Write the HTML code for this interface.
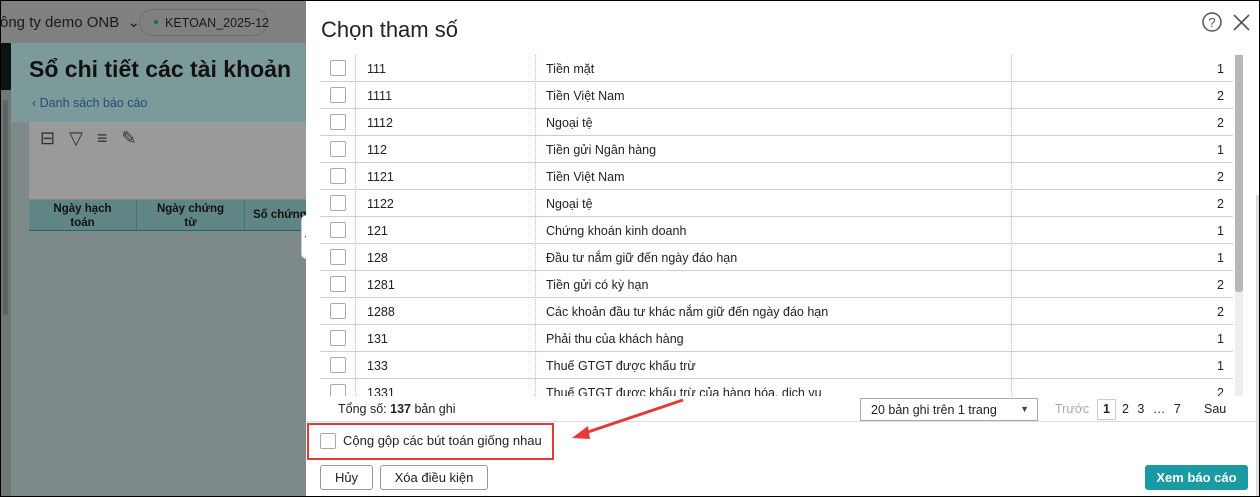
<!DOCTYPE html>
<html><head><meta charset="utf-8"><style>
*{box-sizing:border-box;margin:0;padding:0;white-space:nowrap}
body{width:1260px;height:497px;overflow:hidden;position:relative;font-family:"Liberation Sans",sans-serif;background:#7e8a8a;font-size:13px;color:#222}
.abs{position:absolute}
.row{position:absolute;left:320px;width:913px;height:27px;border-bottom:1px solid #cfcfcf}
.row .cb{position:absolute;left:10px;top:5px;width:16px;height:16px;border:1px solid #aaa;border-radius:2px;background:#fff}
.row span{position:absolute;top:7px;font-size:12.5px}
.c1{left:47px}.c2{left:226px}.c3{right:9px;color:#222}
.btn{position:absolute;top:465px;height:25px;border:1px solid #999;border-radius:3px;background:#fff;font-size:13px;text-align:center;line-height:23px}
.dl{position:absolute;top:55px;height:341px;width:0;border-left:1px dotted #9cd0d0}
</style></head><body>
<div class="abs" style="left:0;top:0;width:306px;height:43px;background:#808080"></div>
<div class="abs" style="left:0;top:13px;font-size:15px;color:#1a1a1a">ông ty demo ONB &nbsp;⌄</div>
<div class="abs" style="left:139px;top:9px;width:129px;height:27px;border:1px solid #6f6f6f;border-radius:14px;font-size:12.5px;padding:6px 0 0 25px;color:#1a1a1a">KETOAN_2025-12</div>
<div class="abs" style="left:154px;top:20px;width:4px;height:4px;border-radius:50%;background:#0d6f6f"></div>
<div class="abs" style="left:0;top:43px;width:11px;height:47px;background:#0a1212"></div>
<div class="abs" style="left:0;top:90px;width:11px;height:407px;background:#6f7777"></div>
<div class="abs" style="left:3px;top:100px;width:5px;height:215px;background:#5d6464;border-radius:3px"></div>
<div class="abs" style="left:11px;top:43px;width:295px;height:79px;background:#7d9a9a"></div>
<div class="abs" style="left:29px;top:56px;font-size:23px;font-weight:bold;color:#111">Sổ chi tiết các tài khoản</div>
<div class="abs" style="left:32px;top:96px;font-size:12.5px;color:#1e4e7a">‹ Danh sách báo cáo</div>
<div class="abs" style="left:29px;top:122px;width:277px;height:78px;background:#9a9a9a;border-bottom:1px solid #888"></div>
<div class="abs" style="left:40px;top:128px;font-size:18px;color:#333;letter-spacing:14px">⊟▽≡✎</div>
<div class="abs" style="left:29px;top:200px;width:277px;height:31px;background:#5f8585;border-bottom:1px solid #1e6b6b;font-size:11.5px;font-weight:bold;color:#111;overflow:hidden">
<div class="abs" style="left:0;width:107px;text-align:center;top:2px;line-height:14px;white-space:normal">Ngày hạch<br>toán</div>
<div class="abs" style="left:107px;top:0;width:1px;height:31px;background:#4d7070"></div>
<div class="abs" style="left:108px;width:107px;text-align:center;top:2px;line-height:14px;white-space:normal">Ngày chứng<br>từ</div>
<div class="abs" style="left:215px;top:0;width:1px;height:31px;background:#4d7070"></div>
<div class="abs" style="left:224px;top:9px">Số chứng</div>
</div>
<div class="abs" style="left:301px;top:215px;width:11px;height:44px;background:#fff;border:1px solid #ccc;border-radius:5px;font-size:12px;line-height:40px;text-align:center;color:#555">‹</div>
<div class="abs" style="left:306px;top:0;width:954px;height:497px;background:#fff"></div>
<div class="abs" style="left:321px;top:17px;font-size:22px;color:#222">Chọn tham số</div>
<svg class="abs" style="left:1202px;top:12px" width="50" height="22"><circle cx="10" cy="10" r="9" fill="none" stroke="#555" stroke-width="1.5"/><text x="10" y="15" font-size="13" text-anchor="middle" fill="#555" font-family="Liberation Sans">?</text><path d="M32 3 L47 18 M47 3 L32 18" stroke="#555" stroke-width="1.6"/></svg>
<div class="row" style="top:55px"><div class="cb"></div><span class="c1">111</span><span class="c2">Tiền mặt</span><span class="c3">1</span></div>
<div class="row" style="top:82px"><div class="cb"></div><span class="c1">1111</span><span class="c2">Tiền Việt Nam</span><span class="c3">2</span></div>
<div class="row" style="top:109px"><div class="cb"></div><span class="c1">1112</span><span class="c2">Ngoại tệ</span><span class="c3">2</span></div>
<div class="row" style="top:136px"><div class="cb"></div><span class="c1">112</span><span class="c2">Tiền gửi Ngân hàng</span><span class="c3">1</span></div>
<div class="row" style="top:163px"><div class="cb"></div><span class="c1">1121</span><span class="c2">Tiền Việt Nam</span><span class="c3">2</span></div>
<div class="row" style="top:190px"><div class="cb"></div><span class="c1">1122</span><span class="c2">Ngoại tệ</span><span class="c3">2</span></div>
<div class="row" style="top:217px"><div class="cb"></div><span class="c1">121</span><span class="c2">Chứng khoán kinh doanh</span><span class="c3">1</span></div>
<div class="row" style="top:244px"><div class="cb"></div><span class="c1">128</span><span class="c2">Đầu tư nắm giữ đến ngày đáo hạn</span><span class="c3">1</span></div>
<div class="row" style="top:271px"><div class="cb"></div><span class="c1">1281</span><span class="c2">Tiền gửi có kỳ hạn</span><span class="c3">2</span></div>
<div class="row" style="top:298px"><div class="cb"></div><span class="c1">1288</span><span class="c2">Các khoản đầu tư khác nắm giữ đến ngày đáo hạn</span><span class="c3">2</span></div>
<div class="row" style="top:325px"><div class="cb"></div><span class="c1">131</span><span class="c2">Phải thu của khách hàng</span><span class="c3">1</span></div>
<div class="row" style="top:352px"><div class="cb"></div><span class="c1">133</span><span class="c2">Thuế GTGT được khấu trừ</span><span class="c3">1</span></div>
<div class="abs" style="left:320px;top:379px;width:913px;height:17px;overflow:hidden"><div class="row" style="top:0;left:0;border:0"><div class="cb"></div><span class="c1">1331</span><span class="c2">Thuế GTGT được khấu trừ của hàng hóa, dịch vụ</span><span class="c3">2</span></div></div>
<div class="dl" style="left:355px"></div><div class="dl" style="left:535px"></div><div class="dl" style="left:1011px"></div>
<div class="abs" style="left:1235px;top:55px;width:8px;height:341px;background:#eee"></div>
<div class="abs" style="left:1235px;top:55px;width:8px;height:237px;background:#b5b8bc;border-radius:0 0 3px 3px"></div>
<div class="abs" style="left:1256px;top:195px;width:4px;height:302px;background:#ddd"></div>
<div class="abs" style="left:338px;top:402px;font-size:12.5px">Tổng số: <b>137</b> bản ghi</div>
<div class="abs" style="left:860px;top:398px;width:178px;height:23px;border:1px solid #aaa;font-size:12.5px;padding:4px 0 0 10px">20 bản ghi trên 1 trang<span style="position:absolute;right:8px;top:5px;font-size:9px;color:#444">▼</span></div>
<div class="abs" style="left:1055px;top:402px;font-size:12.5px;color:#aaa">Trước</div>
<div class="abs" style="left:1097px;top:399px;width:19px;height:21px;border:1px solid #ccc;font-size:12.5px;text-align:center;line-height:19px;font-weight:bold">1</div>
<div class="abs" style="left:1122px;top:402px;font-size:12.5px;word-spacing:5px">2 3 … 7</div>
<div class="abs" style="left:1204px;top:402px;font-size:12.5px">Sau</div>
<div class="abs" style="left:306px;top:421px;width:954px;height:1px;background:#ddd"></div>
<div class="abs" style="left:307px;top:423px;width:247px;height:37px;border:2px solid #e53935"></div>
<div class="abs" style="left:320px;top:433px;width:16px;height:16px;border:1px solid #aaa;border-radius:2px"></div>
<div class="abs" style="left:343px;top:433px;font-size:13px">Cộng gộp các bút toán giống nhau</div>
<svg class="abs" style="left:560px;top:390px" width="140" height="60"><path d="M123 10 L22 44" stroke="#e53935" stroke-width="3"/><path d="M12 48 L28 36 L30 49 Z" fill="#e53935"/></svg>
<div class="btn" style="left:320px;width:53px">Hủy</div>
<div class="btn" style="left:380px;width:108px">Xóa điều kiện</div>
<div class="btn" style="left:1145px;width:103px;background:#1a9ba4;border-color:#1a9ba4;color:#fff;font-weight:bold">Xem báo cáo</div>
<div class="abs" style="left:0;top:0;width:1260px;height:497px;border:1px solid #000;pointer-events:none"></div>
</body></html>
